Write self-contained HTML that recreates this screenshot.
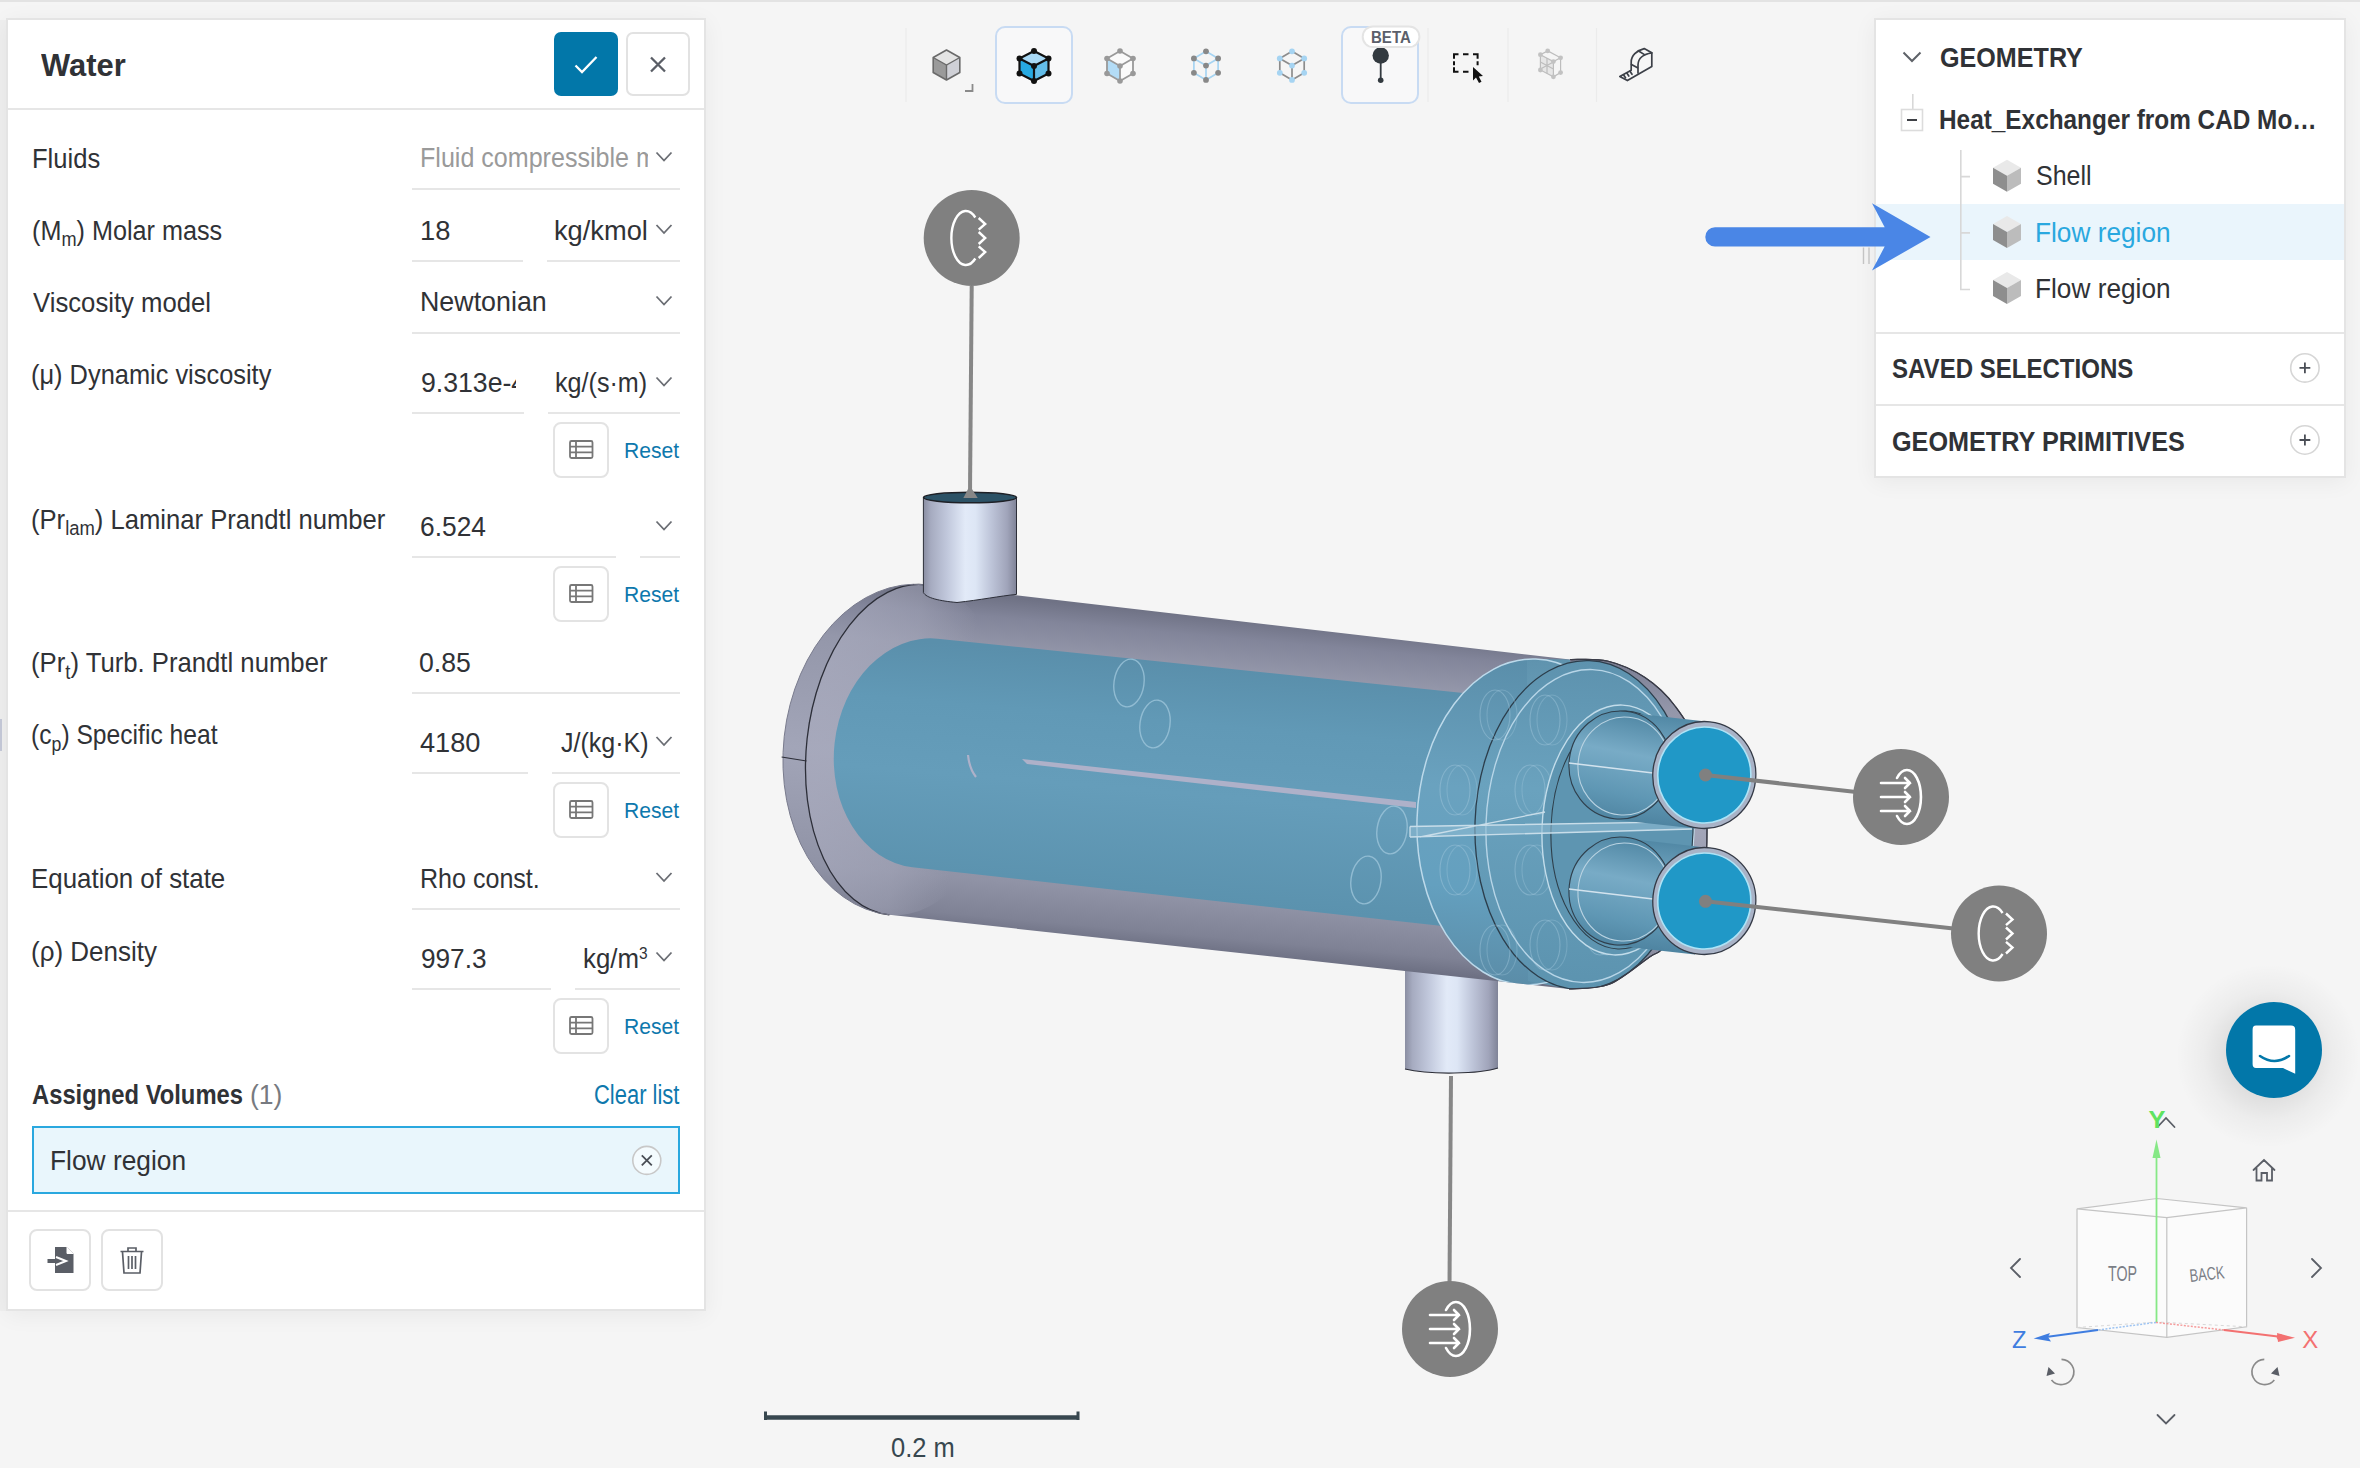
<!DOCTYPE html>
<html><head><meta charset="utf-8"><title>SimScale - Water</title>
<style>
html,body{margin:0;padding:0}
body{width:2360px;height:1468px;overflow:hidden;position:relative;background:#f5f5f5;font-family:"Liberation Sans",sans-serif}
.t{position:absolute;white-space:nowrap;transform-origin:0 0}
.clip{position:absolute;overflow:hidden}
.clip .t{position:absolute}
.box{position:absolute;box-sizing:border-box}
.topbar{position:absolute;left:0;top:0;width:2360px;height:2px;background:#e3e3e3}
.panel{position:absolute;background:#fff;border:2px solid #e4e4e4;box-sizing:border-box;box-shadow:0 4px 22px rgba(0,0,0,0.055)}
</style></head><body>
<div class="topbar"></div>
<div class="box" style="left:0;top:20px;width:6px;height:1291px;background:#efefef"></div>
<div class="box" style="left:0;top:719px;width:2px;height:32px;background:#c6cad9"></div>
<svg style="position:absolute;left:0;top:0" width="2360" height="1468" viewBox="0 0 2360 1468">
<defs>
<linearGradient id="gShell" gradientUnits="userSpaceOnUse" x1="1200" y1="615" x2="1170" y2="950">
 <stop offset="0" stop-color="#6f7285"/><stop offset="0.06" stop-color="#82859a"/><stop offset="0.16" stop-color="#9497aa"/>
 <stop offset="0.5" stop-color="#a2a5b8"/><stop offset="0.84" stop-color="#9093a6"/><stop offset="0.95" stop-color="#7f8295"/><stop offset="1" stop-color="#6d7083"/>
</linearGradient>
<linearGradient id="gBlue" gradientUnits="userSpaceOnUse" x1="1200" y1="665" x2="1180" y2="900">
 <stop offset="0" stop-color="#5a8fab"/><stop offset="0.25" stop-color="#6199b6"/><stop offset="0.55" stop-color="#659dba"/><stop offset="1" stop-color="#5b92ae"/>
</linearGradient>
<linearGradient id="gNoz" x1="0" y1="0" x2="1" y2="0">
 <stop offset="0" stop-color="#8a8ea2"/><stop offset="0.08" stop-color="#a6abc0"/><stop offset="0.25" stop-color="#c0c7db"/><stop offset="0.45" stop-color="#e2eaf8"/>
 <stop offset="0.56" stop-color="#dde6f5"/><stop offset="0.72" stop-color="#bfc6da"/><stop offset="0.9" stop-color="#a0a4ba"/><stop offset="1" stop-color="#7f8397"/>
</linearGradient>
<linearGradient id="gFl" gradientUnits="userSpaceOnUse" x1="1500" y1="660" x2="1480" y2="990">
 <stop offset="0" stop-color="#5a8eaa"/><stop offset="0.4" stop-color="#6aa2bf"/><stop offset="0.7" stop-color="#64a0bf"/><stop offset="1" stop-color="#5a8ba6"/>
</linearGradient>
<linearGradient id="gTube0" gradientUnits="userSpaceOnUse" x1="1640" y1="712" x2="1630" y2="830">
 <stop offset="0" stop-color="#4f86a3"/><stop offset="0.35" stop-color="#78abc6"/><stop offset="0.7" stop-color="#5f97b4"/><stop offset="1" stop-color="#4a7f9c"/>
</linearGradient>
<linearGradient id="gTube1" gradientUnits="userSpaceOnUse" x1="1640" y1="838" x2="1630" y2="956">
 <stop offset="0" stop-color="#4f86a3"/><stop offset="0.35" stop-color="#78abc6"/><stop offset="0.7" stop-color="#5f97b4"/><stop offset="1" stop-color="#4a7f9c"/>
</linearGradient>
<linearGradient id="gFl2" gradientUnits="userSpaceOnUse" x1="1550" y1="660" x2="1540" y2="990">
 <stop offset="0" stop-color="#5f93ae"/><stop offset="0.45" stop-color="#78afca"/><stop offset="1" stop-color="#5e92ad"/>
</linearGradient>
<linearGradient id="gFace" gradientUnits="userSpaceOnUse" x1="1590" y1="660" x2="1580" y2="990">
 <stop offset="0" stop-color="#5d92ae"/><stop offset="0.4" stop-color="#6aa2be"/><stop offset="1" stop-color="#5c93af"/>
</linearGradient>
<linearGradient id="gDomeL" gradientUnits="userSpaceOnUse" x1="820" y1="0" x2="1010" y2="0">
 <stop offset="0" stop-color="#a8aabd" stop-opacity="0.7"/><stop offset="0.45" stop-color="#a8aabd" stop-opacity="0.45"/><stop offset="0.75" stop-color="#a8aabd" stop-opacity="0"/>
</linearGradient>
<radialGradient id="gChatSh" cx="0.5" cy="0.5" r="0.5">
 <stop offset="0.45" stop-color="#000" stop-opacity="0.09"/><stop offset="0.7" stop-color="#000" stop-opacity="0.035"/><stop offset="1" stop-color="#000" stop-opacity="0"/>
</radialGradient>
</defs>
<path d="M1405,955 L1498,955 L1498,1068 C1480,1074 1430,1075 1405,1069 Z" fill="url(#gNoz)"/>
<path d="M1405,1069 C1430,1075 1480,1074 1498,1068" fill="none" stroke="#2c2e38" stroke-width="1.2"/>
<clipPath id="cpShell"><path d="M889.3,914.8 A124,166 6.3 0 1 925.7,584.8 L1570,659.5 C1576.2,659.8 1594.9,658.0 1607.4,661.0 C1619.9,664.0 1633.7,670.0 1645.0,677.5 C1656.3,685.0 1666.3,694.2 1675.0,706.0 C1683.7,717.8 1691.7,728.2 1697.0,748.0 C1702.3,767.8 1706.8,798.8 1707.0,825.0 C1707.2,851.2 1705.2,884.6 1698.0,905.0 C1690.8,925.4 1672.1,938.6 1664.0,947.2 C1655.9,955.9 1658.7,950.7 1649.6,956.9 C1640.5,963.1 1622.7,978.9 1609.3,984.3 C1595.9,989.6 1575.7,988.2 1569.0,989.0 Z"/></clipPath>
<path d="M889.3,914.8 A124,166 6.3 0 1 925.7,584.8 L1570,659.5 C1576.2,659.8 1594.9,658.0 1607.4,661.0 C1619.9,664.0 1633.7,670.0 1645.0,677.5 C1656.3,685.0 1666.3,694.2 1675.0,706.0 C1683.7,717.8 1691.7,728.2 1697.0,748.0 C1702.3,767.8 1706.8,798.8 1707.0,825.0 C1707.2,851.2 1705.2,884.6 1698.0,905.0 C1690.8,925.4 1672.1,938.6 1664.0,947.2 C1655.9,955.9 1658.7,950.7 1649.6,956.9 C1640.5,963.1 1622.7,978.9 1609.3,984.3 C1595.9,989.6 1575.7,988.2 1569.0,989.0 Z" fill="url(#gShell)"/>
<path d="M1570.0,659.5 C1576.2,659.8 1594.9,658.0 1607.4,661.0 C1619.9,664.0 1633.7,670.0 1645.0,677.5 C1656.3,685.0 1666.3,694.2 1675.0,706.0 C1683.7,717.8 1691.7,728.2 1697.0,748.0 C1702.3,767.8 1706.8,798.8 1707.0,825.0 C1707.2,851.2 1705.2,884.6 1698.0,905.0 C1690.8,925.4 1672.1,938.6 1664.0,947.2 C1655.9,955.9 1658.7,950.7 1649.6,956.9 C1640.5,963.1 1622.7,978.9 1609.3,984.3 C1595.9,989.6 1575.7,988.2 1569.0,989.0" fill="none" stroke="#3a3c48" stroke-width="1.2"/>
<g clip-path="url(#cpShell)"><ellipse cx="907.5" cy="749.8" rx="101" ry="166" transform="rotate(6.3 907.5 749.8)" fill="url(#gDomeL)"/></g>
<path d="M889.3,914.8 A101,166 6.3 0 1 925.7,584.8" fill="none" stroke="#2c2e38" stroke-width="1.3"/>
<path d="M889.3,914.8 A124,166 6.3 0 1 925.7,584.8" fill="none" stroke="#7a7c8e" stroke-width="1"/>
<path d="M781.6,757 L806.5,761" stroke="#2c2e38" stroke-width="1.2"/>
<path d="M912.4,867.3 A92,115 6.3 0 1 937.6,638.7 L1150,660.5 L1560,703 L1560,939 L1150,893.7 Z" fill="url(#gBlue)"/>
<path d="M1022,759 L1416,802 L1416,808 L1027,764 Z" fill="#aeb1c9"/>
<path d="M968,755 C969,765 972,772 976,777" fill="none" stroke="#aeb1c9" stroke-width="2.2"/>
<ellipse cx="1129" cy="683" rx="15" ry="24" transform="rotate(8 1129 683)" fill="none" stroke="#9cc4da" stroke-width="1.4" opacity="0.8"/>
<ellipse cx="1155" cy="724" rx="15" ry="24" transform="rotate(8 1155 724)" fill="none" stroke="#9cc4da" stroke-width="1.4" opacity="0.8"/>
<ellipse cx="1392" cy="830" rx="15" ry="24" transform="rotate(8 1392 830)" fill="none" stroke="#9cc4da" stroke-width="1.4" opacity="0.8"/>
<ellipse cx="1366" cy="880" rx="15" ry="24" transform="rotate(8 1366 880)" fill="none" stroke="#9cc4da" stroke-width="1.4" opacity="0.8"/>
<g clip-path="url(#cpShell)">
<ellipse cx="1530" cy="822" rx="113" ry="163" transform="rotate(2 1530 822)" fill="url(#gFl)"/>
<path d="M1527,659 L1570,659.5 L1569,989 L1528,981 Z" fill="url(#gFl2)"/>
<ellipse cx="1530" cy="822" rx="113" ry="163" transform="rotate(2 1530 822)" fill="none" stroke="#bcd9ea" stroke-width="1.5"/>
<ellipse cx="1583.5" cy="825" rx="108.5" ry="164.5" transform="rotate(2 1583.5 825)" fill="url(#gFace)" stroke="#2c3e4c" stroke-width="1.3"/>
<ellipse cx="1587" cy="826" rx="101" ry="156.5" transform="rotate(2 1587 826)" fill="none" stroke="#b7d5e7" stroke-width="1.4"/>
<ellipse cx="1455" cy="790" rx="15" ry="25" fill="none" stroke="#a9cde0" stroke-width="1.1" opacity="0.4"/>
<ellipse cx="1462" cy="790" rx="15" ry="25" fill="none" stroke="#a9cde0" stroke-width="1.1" opacity="0.3"/>
<ellipse cx="1455" cy="870" rx="15" ry="25" fill="none" stroke="#a9cde0" stroke-width="1.1" opacity="0.4"/>
<ellipse cx="1462" cy="870" rx="15" ry="25" fill="none" stroke="#a9cde0" stroke-width="1.1" opacity="0.3"/>
<ellipse cx="1495" cy="715" rx="15" ry="25" fill="none" stroke="#a9cde0" stroke-width="1.1" opacity="0.4"/>
<ellipse cx="1502" cy="715" rx="15" ry="25" fill="none" stroke="#a9cde0" stroke-width="1.1" opacity="0.3"/>
<ellipse cx="1495" cy="950" rx="15" ry="25" fill="none" stroke="#a9cde0" stroke-width="1.1" opacity="0.4"/>
<ellipse cx="1502" cy="950" rx="15" ry="25" fill="none" stroke="#a9cde0" stroke-width="1.1" opacity="0.3"/>
<ellipse cx="1545" cy="720" rx="15" ry="25" fill="none" stroke="#a9cde0" stroke-width="1.1" opacity="0.4"/>
<ellipse cx="1552" cy="720" rx="15" ry="25" fill="none" stroke="#a9cde0" stroke-width="1.1" opacity="0.3"/>
<ellipse cx="1530" cy="790" rx="15" ry="25" fill="none" stroke="#a9cde0" stroke-width="1.1" opacity="0.4"/>
<ellipse cx="1537" cy="790" rx="15" ry="25" fill="none" stroke="#a9cde0" stroke-width="1.1" opacity="0.3"/>
<ellipse cx="1530" cy="870" rx="15" ry="25" fill="none" stroke="#a9cde0" stroke-width="1.1" opacity="0.4"/>
<ellipse cx="1537" cy="870" rx="15" ry="25" fill="none" stroke="#a9cde0" stroke-width="1.1" opacity="0.3"/>
<ellipse cx="1545" cy="945" rx="15" ry="25" fill="none" stroke="#a9cde0" stroke-width="1.1" opacity="0.4"/>
<ellipse cx="1552" cy="945" rx="15" ry="25" fill="none" stroke="#a9cde0" stroke-width="1.1" opacity="0.3"/>
<ellipse cx="1600" cy="735" rx="15" ry="25" fill="none" stroke="#a9cde0" stroke-width="1.1" opacity="0.4"/>
<ellipse cx="1607" cy="735" rx="15" ry="25" fill="none" stroke="#a9cde0" stroke-width="1.1" opacity="0.3"/>
<ellipse cx="1600" cy="930" rx="15" ry="25" fill="none" stroke="#a9cde0" stroke-width="1.1" opacity="0.4"/>
<ellipse cx="1607" cy="930" rx="15" ry="25" fill="none" stroke="#a9cde0" stroke-width="1.1" opacity="0.3"/>
<ellipse cx="1618" cy="830" rx="76" ry="125" transform="rotate(2 1618 830)" fill="#5e95b1" stroke="#c2dcea" stroke-width="1.4"/>
<ellipse cx="1622" cy="830" rx="71" ry="119" transform="rotate(2 1622 830)" fill="none" stroke="#2e3f4b" stroke-width="1.1"/>
<path d="M1410,826.5 L1692,821.6 L1692,829 L1410,837 Z" fill="#8dbbd2" opacity="0.6"/>
<path d="M1410,826.5 L1692,821.6 M1410,837 L1692,829 M1410,826.5 L1410,837 M1420,837 L1545,812" fill="none" stroke="#c8dde9" stroke-width="1.3"/>
</g>
<path d="M1570.0,659.5 C1576.2,659.8 1594.9,658.0 1607.4,661.0 C1619.9,664.0 1633.7,670.0 1645.0,677.5 C1656.3,685.0 1666.3,694.2 1675.0,706.0 C1683.7,717.8 1691.7,728.2 1697.0,748.0 C1702.3,767.8 1706.8,798.8 1707.0,825.0 C1707.2,851.2 1705.2,884.6 1698.0,905.0 C1690.8,925.4 1672.1,938.6 1664.0,947.2 C1655.9,955.9 1658.7,950.7 1649.6,956.9 C1640.5,963.1 1622.7,978.9 1609.3,984.3 C1595.9,989.6 1575.7,988.2 1569.0,989.0" fill="none" stroke="#3a3c48" stroke-width="1.2"/>
<path d="M1622,712 L1706,721.5 L1695,828.5 L1609,819 Z" fill="url(#gTube0)"/><ellipse cx="1620" cy="765" rx="51" ry="54" transform="rotate(6 1620 765)" fill="url(#gTube0)" stroke="#2f3f4c" stroke-width="1.1"/><ellipse cx="1624" cy="766" rx="46" ry="49" transform="rotate(6 1624 766)" fill="none" stroke="#b9d3e2" stroke-width="1.1"/><path d="M1569,763 L1653,773" stroke="#d3e3ee" stroke-width="1.3"/><ellipse cx="1704.3" cy="775" rx="51.5" ry="53.5" transform="rotate(6 1704.3 775)" fill="#a9b3c7" stroke="#343a46" stroke-width="1.3"/><ellipse cx="1704.3" cy="775" rx="46.5" ry="48" transform="rotate(6 1704.3 775)" fill="#2098c7" stroke="#aee3f6" stroke-width="1.6"/>
<path d="M1622,838 L1706,847.5 L1695,954.5 L1609,945 Z" fill="url(#gTube1)"/><ellipse cx="1620" cy="891" rx="51" ry="54" transform="rotate(6 1620 891)" fill="url(#gTube1)" stroke="#2f3f4c" stroke-width="1.1"/><ellipse cx="1624" cy="892" rx="46" ry="49" transform="rotate(6 1624 892)" fill="none" stroke="#b9d3e2" stroke-width="1.1"/><path d="M1569,889 L1653,899" stroke="#d3e3ee" stroke-width="1.3"/><ellipse cx="1704.3" cy="901" rx="51.5" ry="53.5" transform="rotate(6 1704.3 901)" fill="#a9b3c7" stroke="#343a46" stroke-width="1.3"/><ellipse cx="1704.3" cy="901" rx="46.5" ry="48" transform="rotate(6 1704.3 901)" fill="#2098c7" stroke="#aee3f6" stroke-width="1.6"/>
<path d="M923.4,497.5 L1016.5,497.5 L1016.5,594.4 C1000,596 980,600 957,602.5 C940,601 926,598 923.4,592.5 Z" fill="url(#gNoz)"/>
<path d="M923.4,497.5 L923.4,592.5 C926,598 940,601 957,602.5 C980,600 1000,596 1016.5,594.4 L1016.5,497.5" fill="none" stroke="#2c2e38" stroke-width="1"/>
<ellipse cx="970" cy="497.5" rx="46.5" ry="5.2" fill="#2c5266" stroke="#1e2026" stroke-width="1.5"/>
<path d="M971.7,286 L970,492" stroke="#878787" stroke-width="4"/>
<path d="M968,489 L972,489 L977.7,498 L963.4,498 Z" fill="#878787"/>
<path d="M1705.5,775 L1901,797" stroke="#808080" stroke-width="4"/>
<path d="M1705.5,901.3 L1999,933.5" stroke="#808080" stroke-width="4"/>
<circle cx="1705.5" cy="775" r="6.5" fill="#808080"/><circle cx="1705.5" cy="901.3" r="6.5" fill="#808080"/>
<path d="M1451,1076 L1449.5,1285" stroke="#878787" stroke-width="4"/>
<circle cx="971.7" cy="238" r="48" fill="#808080"/><g fill="none" stroke="#fff" stroke-width="2.4" stroke-linecap="butt" stroke-linejoin="miter"><path d="M975.3,217.5 A14.5,27 0 1 0 975.3,258.5"/><path d="M978.7,218.0 L985.2,224.0 L978.7,229.7"/><path d="M978.7,232.0 L985.2,238.0 L978.7,244.0"/><path d="M978.7,246.3 L985.2,252.0 L978.7,258.0"/></g>
<circle cx="1901" cy="797" r="48" fill="#808080"/><g fill="none" stroke="#fff" stroke-width="2.6" stroke-linecap="round"><path d="M1897.0,778.0 A14,27 0 1 1 1897.0,816.0"/><path d="M1881,783 L1910,783 M1905,778 L1910,783 L1905,788"/><path d="M1881,797 L1910,797 M1905,792 L1910,797 L1905,802"/><path d="M1881,811 L1910,811 M1905,806 L1910,811 L1905,816"/></g>
<circle cx="1999" cy="933.5" r="48" fill="#808080"/><g fill="none" stroke="#fff" stroke-width="2.4" stroke-linecap="butt" stroke-linejoin="miter"><path d="M2002.6,913.0 A14.5,27 0 1 0 2002.6,954.0"/><path d="M2006.0,913.5 L2012.5,919.5 L2006.0,925.2"/><path d="M2006.0,927.5 L2012.5,933.5 L2006.0,939.5"/><path d="M2006.0,941.8 L2012.5,947.5 L2006.0,953.5"/></g>
<circle cx="1450" cy="1329" r="48" fill="#808080"/><g fill="none" stroke="#fff" stroke-width="2.6" stroke-linecap="round"><path d="M1446.0,1310.0 A14,27 0 1 1 1446.0,1348.0"/><path d="M1430,1315 L1459,1315 M1454,1310 L1459,1315 L1454,1320"/><path d="M1430,1329 L1459,1329 M1454,1324 L1459,1329 L1454,1334"/><path d="M1430,1343 L1459,1343 M1454,1338 L1459,1343 L1454,1348"/></g>
<path d="M764,1417.5 L1079,1417.5" stroke="#37474f" stroke-width="4.5"/>
<path d="M765.5,1411.5 L765.5,1420 M1078,1411.5 L1078,1420" stroke="#37474f" stroke-width="3"/>
<circle cx="2268" cy="1056" r="92" fill="url(#gChatSh)"/>
<circle cx="2274" cy="1050" r="48" fill="#0277a9"/>
<path d="M2256,1025.5 L2291,1025.5 Q2295.2,1025.5 2295.2,1029.7 L2295.2,1073.8 L2283,1068 L2256,1068 Q2252.6,1068 2252.6,1064 L2252.6,1029.7 Q2252.6,1025.5 2256,1025.5 Z" fill="#fff"/>
<path d="M2260,1056 Q2274.5,1066 2289,1056" fill="none" stroke="#0277a9" stroke-width="2.6" stroke-linecap="round"/>
<path d="M2077,1208.8 L2157,1198.5 L2246.6,1207.8 L2246.6,1326.8 L2166.8,1337.4 L2077,1327.5 Z" fill="#fbfbfb"/>
<g fill="none" stroke="#c4c4c4" stroke-width="1.2"><path d="M2077,1208.8 L2157,1198.5 L2246.6,1207.8 L2166.8,1217.7 Z"/><path d="M2077,1208.8 L2077,1327.5 L2166.8,1337.4 L2246.6,1326.8 L2246.6,1207.8"/><path d="M2166.8,1217.7 L2166.8,1337.4"/></g>
<path d="M2077,1327.5 L2157,1322 L2246.6,1326.8" fill="none" stroke="#d8d8d8" stroke-width="1" stroke-dasharray="3 3"/>
<path d="M2156.5,1322 L2156.5,1152" stroke="#86e886" stroke-width="1.8"/><path d="M2156.5,1139.5 L2160.5,1158 L2152.5,1158 Z" fill="#86e886"/>
<path d="M2156,1322.4 L2098,1330" stroke="#9cc3f2" stroke-width="1.5" stroke-dasharray="2 1.5"/><path d="M2098,1330 L2046,1337" stroke="#3f7de0" stroke-width="2"/><path d="M2033.6,1338.5 L2050,1333 L2048,1337 L2051,1341.5 Z" fill="#3f7de0"/>
<path d="M2156,1322.4 L2224,1330" stroke="#f59a9a" stroke-width="1.5" stroke-dasharray="2 1.5"/><path d="M2224,1330 L2282,1337" stroke="#f37171" stroke-width="2.2"/><path d="M2295,1337.8 L2277,1333 L2278,1342 Z" fill="#f37171"/><circle cx="2279.7" cy="1337" r="3" fill="#f37171"/>
<g fill="none" stroke="#5a5e66" stroke-width="1.8" stroke-linecap="round"><path d="M2157.5,1127 L2166,1118 L2174.5,1127"/><path d="M2157.5,1415 L2166,1423.5 L2174.5,1415"/><path d="M2020,1259 L2011,1268 L2020,1277"/><path d="M2312,1259 L2321,1268 L2312,1277"/><path d="M2253.5,1170 L2264,1160 L2274.5,1170 M2256.5,1168 L2256.5,1180.5 L2261.5,1180.5 L2261.5,1173 L2267,1173 L2267,1180.5 L2272,1180.5 L2272,1168"/></g>
<g fill="none" stroke="#8a8a8a" stroke-width="1.7"><path d="M2061.5,1359.4 A12.6,12.6 0 1 1 2051.5,1380"/><path d="M2264.3,1359.4 A12.6,12.6 0 1 0 2274.3,1380"/></g>
<path d="M2046.5,1376 L2048.5,1367 L2055,1373.5 Z" fill="#5a5e66"/><path d="M2279.5,1376 L2277.5,1367 L2271,1373.5 Z" fill="#5a5e66"/>
<text x="2108" y="1281" font-family="Liberation Sans" font-size="21.5" fill="#7a7e86" textLength="29" lengthAdjust="spacingAndGlyphs">TOP</text>
<text x="2189.5" y="1282" font-family="Liberation Sans" font-size="18" fill="#7a7e86" textLength="35" lengthAdjust="spacingAndGlyphs" transform="rotate(-6 2189 1275)">BACK</text>
<text x="2148.5" y="1128" font-family="Liberation Sans" font-size="24" font-weight="700" fill="#5fe35f" textLength="17" lengthAdjust="spacingAndGlyphs">Y</text>
<text x="2012" y="1348.3" font-family="Liberation Sans" font-size="23" fill="#3f7de0" textLength="14.5" lengthAdjust="spacingAndGlyphs">Z</text>
<text x="2302.3" y="1348.3" font-family="Liberation Sans" font-size="23" fill="#f37171" textLength="16" lengthAdjust="spacingAndGlyphs">X</text>
</svg>
<svg style="position:absolute;left:880px;top:0" width="800" height="120" viewBox="880 0 800 120">
<path d="M906,28 L906,102" stroke="#ebebeb" stroke-width="1.2"/>
<path d="M1428,28 L1428,102" stroke="#ebebeb" stroke-width="1.2"/>
<path d="M1508,28 L1508,102" stroke="#ebebeb" stroke-width="1.2"/>
<path d="M1596.5,28 L1596.5,102" stroke="#ebebeb" stroke-width="1.2"/>
<rect x="996" y="27" width="76" height="76" rx="9" fill="#f8f8f9" stroke="#c8dbf3" stroke-width="2"/>
<rect x="1342" y="27" width="76" height="76" rx="9" fill="#f8f8f9" stroke="#c8dbf3" stroke-width="2"/>
<polygon points="946.5,50.0 959.8,57.5 946.5,65.0 933.2,57.5" fill="#e4e4e4"/>
<polygon points="933.2,57.5 946.5,65.0 946.5,80.0 933.2,72.5" fill="#9a9a9a"/>
<polygon points="946.5,65.0 959.8,57.5 959.8,72.5 946.5,80.0" fill="#cfd0d6"/>
<polygon points="946.5,50.0 959.8,57.5 959.8,72.5 946.5,80.0 933.2,72.5 933.2,57.5" fill="none" stroke="#6a6a6a" stroke-width="1.6" stroke-linejoin="round"/>
<polyline points="933.2,57.5 946.5,65.0 959.8,57.5" fill="none" stroke="#6a6a6a" stroke-width="1.4"/><path d="M946.5,65.0 L946.5,80" stroke="#6a6a6a" stroke-width="1.4"/>
<path d="M965,91 L972.5,91 L972.5,84" fill="none" stroke="#8a8a8a" stroke-width="1.8"/>
<polygon points="1034.0,51.0 1048.5,58.5 1034.0,66.0 1019.5,58.5" fill="#a9d9f5"/>
<polygon points="1019.5,58.5 1034.0,66.0 1034.0,81.0 1019.5,73.5" fill="#27a9e1"/>
<polygon points="1034.0,66.0 1048.5,58.5 1048.5,73.5 1034.0,81.0" fill="#63bde9"/>
<polygon points="1034.0,51.0 1048.5,58.5 1048.5,73.5 1034.0,81.0 1019.5,73.5 1019.5,58.5" fill="none" stroke="#111" stroke-width="2.2" stroke-linejoin="round"/>
<polyline points="1019.5,58.5 1034.0,66.0 1048.5,58.5" fill="none" stroke="#111" stroke-width="2.2"/><path d="M1034,66.0 L1034,81" stroke="#111" stroke-width="2.2"/>
<circle cx="1034.0" cy="51.0" r="3" fill="#111"/>
<circle cx="1048.5" cy="58.5" r="3" fill="#111"/>
<circle cx="1048.5" cy="73.5" r="3" fill="#111"/>
<circle cx="1034.0" cy="81.0" r="3" fill="#111"/>
<circle cx="1019.5" cy="73.5" r="3" fill="#111"/>
<circle cx="1019.5" cy="58.5" r="3" fill="#111"/>
<circle cx="1034.0" cy="66.0" r="3" fill="#111"/>
<polygon points="1107.0,58.5 1120.0,66.0 1120.0,81.0 1107.0,73.5" fill="#b3dcf6"/>
<polygon points="1120.0,51.0 1133.0,58.5 1120.0,66.0 1107.0,58.5" fill="#fafafa"/><polygon points="1120.0,66.0 1133.0,58.5 1133.0,73.5 1120.0,81.0" fill="#fafafa"/>
<polygon points="1120.0,51.0 1133.0,58.5 1133.0,73.5 1120.0,81.0 1107.0,73.5 1107.0,58.5" fill="none" stroke="#999" stroke-width="1.8" stroke-linejoin="round"/>
<polyline points="1107.0,58.5 1120.0,66.0 1133.0,58.5" fill="none" stroke="#999" stroke-width="1.8"/><path d="M1120,66.0 L1120,81" stroke="#999" stroke-width="1.8"/>
<circle cx="1120.0" cy="51.0" r="2.8" fill="#999"/>
<circle cx="1133.0" cy="58.5" r="2.8" fill="#999"/>
<circle cx="1133.0" cy="73.5" r="2.8" fill="#999"/>
<circle cx="1120.0" cy="81.0" r="2.8" fill="#999"/>
<circle cx="1107.0" cy="73.5" r="2.8" fill="#999"/>
<circle cx="1107.0" cy="58.5" r="2.8" fill="#999"/>
<circle cx="1120.0" cy="66.0" r="2.8" fill="#999"/>
<polygon points="1206.0,51.3 1218.1,58.4 1218.1,72.8 1206.0,79.9 1193.9,72.8 1193.9,58.4" fill="none" stroke="#a6d4f2" stroke-width="1.7"/>
<polyline points="1193.9,58.4 1206.0,65.6 1218.1,58.4" fill="none" stroke="#a6d4f2" stroke-width="1.7"/><path d="M1206,65.6 L1206,79.9" stroke="#a6d4f2" stroke-width="1.7"/>
<circle cx="1206.0" cy="51.3" r="2.9" fill="#888"/>
<circle cx="1218.1" cy="58.4" r="2.9" fill="#888"/>
<circle cx="1218.1" cy="72.8" r="2.9" fill="#888"/>
<circle cx="1206.0" cy="79.9" r="2.9" fill="#888"/>
<circle cx="1193.9" cy="72.8" r="2.9" fill="#888"/>
<circle cx="1193.9" cy="58.4" r="2.9" fill="#888"/>
<circle cx="1206.0" cy="65.6" r="2.9" fill="#888"/>
<polygon points="1292.0,51.3 1304.2,58.4 1304.2,72.8 1292.0,79.9 1279.8,72.8 1279.8,58.4" fill="none" stroke="#8c8c8c" stroke-width="1.7"/>
<polyline points="1279.8,58.4 1292.0,65.6 1304.2,58.4" fill="none" stroke="#8c8c8c" stroke-width="1.7"/><path d="M1292,65.6 L1292,79.9" stroke="#8c8c8c" stroke-width="1.7"/>
<circle cx="1292.0" cy="51.3" r="2.9" fill="#a6d4f2"/>
<circle cx="1304.2" cy="58.4" r="2.9" fill="#a6d4f2"/>
<circle cx="1304.2" cy="72.8" r="2.9" fill="#a6d4f2"/>
<circle cx="1292.0" cy="79.9" r="2.9" fill="#a6d4f2"/>
<circle cx="1279.8" cy="72.8" r="2.9" fill="#a6d4f2"/>
<circle cx="1279.8" cy="58.4" r="2.9" fill="#a6d4f2"/>
<circle cx="1292.0" cy="65.6" r="2.9" fill="#a6d4f2"/>
<path d="M1380.7,60 L1380.7,80" stroke="#333a40" stroke-width="1.8"/><circle cx="1380.7" cy="80.2" r="2.8" fill="#333a40"/><circle cx="1380.7" cy="55.5" r="8.2" fill="#333a40"/>
<rect x="1362.7" y="26.4" width="56.7" height="20.7" rx="10.3" fill="#fff" stroke="#e4e4e4" stroke-width="2"/>
<path d="M1458.5,54.3 L1454,54.3 L1454,58.8 M1463,54.3 L1468.5,54.3 M1473,54.3 L1477.6,54.3 L1477.6,58.8 M1454,61.3 L1454,65.3 M1477.6,61.3 L1477.6,65.3 M1454,67.3 L1454,71.7 L1458.5,71.7 M1463,71.7 L1468.5,71.7" fill="none" stroke="#111" stroke-width="2"/>
<path d="M1473,67 L1473,80.5 L1476,77.5 L1479,83 L1481.5,81.8 L1478.8,76.5 L1483,76 Z" fill="#111"/>
<polygon points="1540.4,54.7 1553.4,61.6 1553.4,76.8 1540.4,70.0" fill="#e6e6e6"/>
<g fill="none" stroke="#bdbdbd" stroke-width="1.2"><polygon points="1547.7,50.9 1560.6,57.8 1560.6,72.6 1553.4,76.8 1540.4,70.0 1540.4,54.7"/><polyline points="1540.4,54.7 1553.4,61.6 1560.6,57.8"/><path d="M1553.4,61.6 L1553.4,76.8 M1547,58 L1547,73.5 M1540.4,62 L1553.4,69 M1540.4,69 L1553.4,62"/></g>
<circle cx="1547.7" cy="50.9" r="2.4" fill="#c2c2c2"/>
<circle cx="1540.4" cy="54.7" r="2.4" fill="#c2c2c2"/>
<circle cx="1560.6" cy="57.8" r="2.4" fill="#c2c2c2"/>
<circle cx="1553.4" cy="61.6" r="2.4" fill="#c2c2c2"/>
<circle cx="1540.4" cy="70" r="2.4" fill="#c2c2c2"/>
<circle cx="1560.6" cy="72.6" r="2.4" fill="#c2c2c2"/>
<circle cx="1553.4" cy="76.8" r="2.4" fill="#c2c2c2"/>
<g fill="none" stroke="#3c4048" stroke-width="1.7" stroke-linejoin="round" stroke-linecap="round"><path d="M1644.2,48.6 L1651.8,52.8 L1651.8,66.5 L1627.4,80.6 L1619.8,76.4 L1631.2,70.3 L1631.2,62 C1631.2,55.5 1636.5,50.5 1644.2,48.6 Z" fill="#f6f6f6"/><path d="M1638,73 L1638,65 C1638,58.5 1643.5,54 1651.8,52.8"/><path d="M1639,51.2 L1644.5,54.6"/><path d="M1631.5,64.5 L1637.5,67.8"/><path d="M1623.5,74.8 L1625.5,77.8 M1626.8,73 L1628.8,76 M1630,71.3 L1632,74.3"/></g>
</svg>
<div class="panel" style="left:6px;top:18px;width:700px;height:1293px"></div>
<div class="box" style="left:8px;top:108px;width:696px;height:2px;background:#e6e6e6"></div>
<div class="box" style="left:554px;top:32px;width:64px;height:64px;border-radius:7px;background:#0277a9"></div>
<div class="box" style="left:626px;top:32px;width:64px;height:64px;border-radius:7px;border:2px solid #e2e2e2;background:#fff"></div>
<div class="box" style="left:412px;top:188px;width:268px;height:2px;background:#e6e6e6"></div>
<div class="box" style="left:412px;top:260px;width:111px;height:2px;background:#e6e6e6"></div>
<div class="box" style="left:547px;top:260px;width:133px;height:2px;background:#e6e6e6"></div>
<div class="box" style="left:412px;top:332px;width:268px;height:2px;background:#e6e6e6"></div>
<div class="box" style="left:412px;top:412px;width:112px;height:2px;background:#e6e6e6"></div>
<div class="box" style="left:548px;top:412px;width:132px;height:2px;background:#e6e6e6"></div>
<div class="box" style="left:412px;top:556px;width:204px;height:2px;background:#e6e6e6"></div>
<div class="box" style="left:640px;top:556px;width:40px;height:2px;background:#e6e6e6"></div>
<div class="box" style="left:412px;top:692px;width:268px;height:2px;background:#e6e6e6"></div>
<div class="box" style="left:412px;top:772px;width:115.5px;height:2px;background:#e6e6e6"></div>
<div class="box" style="left:552px;top:772px;width:128px;height:2px;background:#e6e6e6"></div>
<div class="box" style="left:412px;top:908px;width:268px;height:2px;background:#e6e6e6"></div>
<div class="box" style="left:412px;top:988px;width:139px;height:2px;background:#e6e6e6"></div>
<div class="box" style="left:575px;top:988px;width:105px;height:2px;background:#e6e6e6"></div>
<div class="box" style="left:553px;top:422px;width:56px;height:56px;border:2px solid #e3e3e3;border-radius:8px;background:#fff"></div>
<div class="box" style="left:553px;top:566px;width:56px;height:56px;border:2px solid #e3e3e3;border-radius:8px;background:#fff"></div>
<div class="box" style="left:553px;top:782px;width:56px;height:56px;border:2px solid #e3e3e3;border-radius:8px;background:#fff"></div>
<div class="box" style="left:553px;top:998px;width:56px;height:56px;border:2px solid #e3e3e3;border-radius:8px;background:#fff"></div>
<div class="box" style="left:32px;top:1126px;width:648px;height:67.5px;border:2px solid #2aa8df;background:#e9f6fc"></div>
<div class="box" style="left:8px;top:1210px;width:696px;height:2px;background:#e6e6e6"></div>
<div class="box" style="left:29px;top:1229px;width:62px;height:62px;border:2px solid #e2e2e2;border-radius:8px;background:#fff"></div>
<div class="box" style="left:101px;top:1229px;width:62px;height:62px;border:2px solid #e2e2e2;border-radius:8px;background:#fff"></div>
<svg style="position:absolute;left:0;top:0" width="720" height="1320" viewBox="0 0 720 1320">
<polyline points="575.5,65.5 582,72 596.5,57" fill="none" stroke="#fff" stroke-width="2.3"/>
<path d="M651,57.5 L665,71.5 M665,57.5 L651,71.5" stroke="#5a5e66" stroke-width="2.3"/>
<polyline points="656.5,152.5 664,160.5 671.5,152.5" fill="none" stroke="#6a6d73" stroke-width="1.8"/>
<polyline points="656.5,225 664,233 671.5,225" fill="none" stroke="#6a6d73" stroke-width="1.8"/>
<polyline points="656.5,296.5 664,304.5 671.5,296.5" fill="none" stroke="#6a6d73" stroke-width="1.8"/>
<polyline points="656.5,377.5 664,385.5 671.5,377.5" fill="none" stroke="#6a6d73" stroke-width="1.8"/>
<polyline points="656.5,521.5 664,529.5 671.5,521.5" fill="none" stroke="#6a6d73" stroke-width="1.8"/>
<polyline points="656.5,737 664,745 671.5,737" fill="none" stroke="#6a6d73" stroke-width="1.8"/>
<polyline points="656.5,873 664,881 671.5,873" fill="none" stroke="#6a6d73" stroke-width="1.8"/>
<polyline points="656.5,952.5 664,960.5 671.5,952.5" fill="none" stroke="#6a6d73" stroke-width="1.8"/>
<g fill="none" stroke="#777" stroke-width="1.8"><rect x="570" y="441" width="22.5" height="17" rx="1.5"/><path d="M576,441 L576,458 M570,446.7 L592.5,446.7 M570,452.3 L592.5,452.3"/></g>
<g fill="none" stroke="#777" stroke-width="1.8"><rect x="570" y="585" width="22.5" height="17" rx="1.5"/><path d="M576,585 L576,602 M570,590.7 L592.5,590.7 M570,596.3 L592.5,596.3"/></g>
<g fill="none" stroke="#777" stroke-width="1.8"><rect x="570" y="801" width="22.5" height="17" rx="1.5"/><path d="M576,801 L576,818 M570,806.7 L592.5,806.7 M570,812.3 L592.5,812.3"/></g>
<g fill="none" stroke="#777" stroke-width="1.8"><rect x="570" y="1017" width="22.5" height="17" rx="1.5"/><path d="M576,1017 L576,1034 M570,1022.7 L592.5,1022.7 M570,1028.3 L592.5,1028.3"/></g>
<circle cx="646.8" cy="1160.4" r="14" fill="#fff" fill-opacity="0.5" stroke="#c8c8c8" stroke-width="1.6"/>
<path d="M641.8,1155.4 L651.8,1165.4 M651.8,1155.4 L641.8,1165.4" stroke="#4a4e56" stroke-width="1.8"/>
<path d="M55,1247 L67,1247 L73.5,1253.5 L73.5,1273 L55,1273 L55,1263 L47.5,1263 L47.5,1259 L55,1259 Z" fill="#5a5e66"/>
<path d="M67,1247 L67,1253.5 L73.5,1253.5" fill="#fff" stroke="#fff" stroke-width="1"/>
<path d="M56,1257 L66,1261 L56,1265" fill="none" stroke="#fff" stroke-width="2"/>
<g fill="none" stroke="#5a5e66" stroke-width="1.7"><path d="M120.5,1251.5 L143.5,1251.5 M128,1251.5 L128,1248 L136,1248 L136,1251.5"/><path d="M122.5,1252 L124,1273 L140,1273 L141.5,1252"/><path d="M128.5,1256 L128.5,1269 M132,1256 L132,1269 M135.5,1256 L135.5,1269"/></g>
</svg>
<div class="panel" style="left:1874px;top:18px;width:472px;height:460px"></div>
<div class="box" style="left:1876px;top:204px;width:468px;height:56px;background:#eaf5fc"></div>
<div class="box" style="left:1876px;top:332px;width:468px;height:2px;background:#e6e6e6"></div>
<div class="box" style="left:1876px;top:404px;width:468px;height:2px;background:#e6e6e6"></div>
<svg style="position:absolute;left:1860px;top:30px" width="500" height="440" viewBox="1860 30 500 440">
<polyline points="1903.5,52.5 1912,61 1920.5,52.5" fill="none" stroke="#5e6268" stroke-width="2"/>
<path d="M1912.8,94 L1912.8,109.5" stroke="#d8d8d8" stroke-width="1.6"/>
<rect x="1901.5" y="109.5" width="21" height="21" fill="none" stroke="#dcdcdc" stroke-width="1.6"/>
<path d="M1907,120 L1917,120" stroke="#3e4046" stroke-width="2"/>
<path d="M1960.8,150 L1960.8,289.5 L1970,289.5 M1960.8,176.6 L1970,176.6 M1960.8,232.9 L1970,232.9" fill="none" stroke="#d8d8d8" stroke-width="1.6"/>
<polygon points="2007,159.7 2021,167.7 2007,175.7 1993,167.7" fill="#e9e9e9"/><polygon points="1993,167.7 2007,175.7 2007,191.7 1993,183.7" fill="#8e8e8e"/><polygon points="2007,175.7 2021,167.7 2021,183.7 2007,191.7" fill="#bcbcbc"/>
<polygon points="2007,215.9 2021,223.9 2007,231.9 1993,223.9" fill="#e9e9e9"/><polygon points="1993,223.9 2007,231.9 2007,247.9 1993,239.9" fill="#8e8e8e"/><polygon points="2007,231.9 2021,223.9 2021,239.9 2007,247.9" fill="#bcbcbc"/>
<polygon points="2007,272.1 2021,280.1 2007,288.1 1993,280.1" fill="#e9e9e9"/><polygon points="1993,280.1 2007,288.1 2007,304.1 1993,296.1" fill="#8e8e8e"/><polygon points="2007,288.1 2021,280.1 2021,296.1 2007,304.1" fill="#bcbcbc"/>
<circle cx="2304.9" cy="367.9" r="14.2" fill="#fff" stroke="#d6d6d6" stroke-width="1.6"/>
<path d="M2299.5,367.9 L2310.3,367.9 M2304.9,362.5 L2304.9,373.29999999999995" stroke="#4a4e56" stroke-width="1.8"/>
<circle cx="2304.9" cy="440" r="14.2" fill="#fff" stroke="#d6d6d6" stroke-width="1.6"/>
<path d="M2299.5,440 L2310.3,440 M2304.9,434.6 L2304.9,445.4" stroke="#4a4e56" stroke-width="1.8"/>
</svg>
<svg style="position:absolute;left:1690px;top:190px" width="260" height="100" viewBox="1690 190 260 100"><path d="M1715,227.2 L1884.7,227.2 L1872,203.2 L1930.5,236.9 L1872,270.6 L1884.7,246.6 L1715,246.6 A9.7,9.7 0 0 1 1715,227.2 Z" fill="#4a86e6"/><path d="M1863.5,247.5 L1863.5,264 M1869,247.5 L1869,264" stroke="#c4c4c4" stroke-width="1.4"/></svg>
<span class="t" style="left:40.90px;top:48.92px;font-size:31.98px;line-height:31.98px;color:#303236;font-weight:700;transform:scaleX(0.9667);">Water</span>
<span class="t" style="left:31.93px;top:144.86px;font-size:27.33px;line-height:27.33px;color:#303236;transform:scaleX(0.9357);">Fluids</span>
<div class="clip" style="left:419.6px;top:139.8px;width:228.4px;height:38.1px"><span class="t" style="left:0.15px;top:4.17px;font-size:27.18px;line-height:27.18px;color:#9a9a9a;transform:scaleX(0.9225)">Fluid compressible media</span></div>
<span class="t" style="left:31.98px;top:216.70px;font-size:27.76px;line-height:27.76px;color:#303236;transform:scaleX(0.9082);">(M<span style="font-size:72%;position:relative;top:0.32em">m</span>) Molar mass</span>
<span class="t" style="left:420.00px;top:216.86px;font-size:27.33px;line-height:27.33px;color:#303236;transform:scaleX(1.0000);">18</span>
<span class="t" style="left:554.31px;top:216.86px;font-size:27.33px;line-height:27.33px;color:#303236;transform:scaleX(0.9967);">kg/kmol</span>
<span class="t" style="left:32.90px;top:289.06px;font-size:27.33px;line-height:27.33px;color:#303236;transform:scaleX(0.9404);">Viscosity model</span>
<span class="t" style="left:419.74px;top:287.66px;font-size:27.33px;line-height:27.33px;color:#303236;transform:scaleX(0.9817);">Newtonian</span>
<span class="t" style="left:31.34px;top:360.86px;font-size:27.33px;line-height:27.33px;color:#303236;transform:scaleX(0.9292);">(μ) Dynamic viscosity</span>
<div class="clip" style="left:419.7px;top:364.8px;width:96.3px;height:38.3px"><span class="t" style="left:1.03px;top:4.19px;font-size:27.33px;line-height:27.33px;color:#303236;transform:scaleX(0.9745)">9.313e-4</span></div>
<span class="t" style="left:555.46px;top:368.86px;font-size:27.33px;line-height:27.33px;color:#303236;transform:scaleX(0.9196);">kg/(s·m)</span>
<span class="t" style="left:624.40px;top:440.27px;font-size:22.24px;line-height:22.24px;color:#0e78ad;transform:scaleX(0.9500);">Reset</span>
<span class="t" style="left:30.83px;top:505.56px;font-size:27.33px;line-height:27.33px;color:#303236;transform:scaleX(0.9375);">(Pr<span style="font-size:72%;position:relative;top:0.32em">lam</span>) Laminar Prandtl number</span>
<span class="t" style="left:420.04px;top:512.76px;font-size:27.33px;line-height:27.33px;color:#303236;transform:scaleX(0.9642);">6.524</span>
<span class="t" style="left:624.40px;top:584.07px;font-size:22.24px;line-height:22.24px;color:#0e78ad;transform:scaleX(0.9500);">Reset</span>
<span class="t" style="left:30.82px;top:649.46px;font-size:27.33px;line-height:27.33px;color:#303236;transform:scaleX(0.9403);">(Pr<span style="font-size:72%;position:relative;top:0.32em">t</span>) Turb. Prandtl number</span>
<span class="t" style="left:419.23px;top:649.46px;font-size:27.33px;line-height:27.33px;color:#303236;transform:scaleX(0.9745);">0.85</span>
<span class="t" style="left:30.90px;top:721.36px;font-size:27.33px;line-height:27.33px;color:#303236;transform:scaleX(0.9015);">(c<span style="font-size:72%;position:relative;top:0.32em">p</span>) Specific heat</span>
<span class="t" style="left:420.01px;top:728.86px;font-size:27.33px;line-height:27.33px;color:#303236;transform:scaleX(0.9949);">4180</span>
<span class="t" style="left:560.80px;top:728.86px;font-size:27.33px;line-height:27.33px;color:#303236;transform:scaleX(0.9149);">J/(kg·K)</span>
<span class="t" style="left:624.40px;top:799.87px;font-size:22.24px;line-height:22.24px;color:#0e78ad;transform:scaleX(0.9500);">Reset</span>
<span class="t" style="left:30.81px;top:864.56px;font-size:27.33px;line-height:27.33px;color:#303236;transform:scaleX(0.9470);">Equation of state</span>
<span class="t" style="left:419.97px;top:864.56px;font-size:27.33px;line-height:27.33px;color:#303236;transform:scaleX(0.9167);">Rho const.</span>
<span class="t" style="left:30.80px;top:937.76px;font-size:27.33px;line-height:27.33px;color:#303236;transform:scaleX(0.9508);">(ρ) Density</span>
<span class="t" style="left:420.84px;top:945.26px;font-size:27.33px;line-height:27.33px;color:#303236;transform:scaleX(0.9576);">997.3</span>
<span class="t" style="left:582.51px;top:945.26px;font-size:27.33px;line-height:27.33px;color:#303236;transform:scaleX(0.9455);">kg/m<span style="font-size:60%;position:relative;top:-0.55em">3</span></span>
<span class="t" style="left:624.40px;top:1016.27px;font-size:22.24px;line-height:22.24px;color:#0e78ad;transform:scaleX(0.9500);">Reset</span>
<span class="t" style="left:31.84px;top:1080.71px;font-size:27.62px;line-height:27.62px;color:#303236;font-weight:700;transform:scaleX(0.8613);">Assigned Volumes</span>
<span class="t" style="left:249.88px;top:1080.61px;font-size:27.62px;line-height:27.62px;color:#777a80;transform:scaleX(0.9600);">(1)</span>
<span class="t" style="left:594.40px;top:1080.61px;font-size:27.62px;line-height:27.62px;color:#0e78ad;transform:scaleX(0.7953);">Clear list</span>
<span class="t" style="left:50.39px;top:1146.81px;font-size:27.62px;line-height:27.62px;color:#303236;transform:scaleX(0.9532);">Flow region</span>
<span class="t" style="left:1939.51px;top:42.80px;font-size:28.34px;line-height:28.34px;color:#303236;font-weight:700;transform:scaleX(0.8869);">GEOMETRY</span>
<span class="t" style="left:1939.20px;top:107.31px;font-size:27.03px;line-height:27.03px;color:#303236;font-weight:700;transform:scaleX(0.9017);">Heat_Exchanger from CAD Mo…</span>
<span class="t" style="left:2035.98px;top:162.36px;font-size:27.33px;line-height:27.33px;color:#303236;transform:scaleX(0.9155);">Shell</span>
<span class="t" style="left:2034.58px;top:218.56px;font-size:27.33px;line-height:27.33px;color:#2aa8df;transform:scaleX(0.9601);">Flow region</span>
<span class="t" style="left:2034.58px;top:274.76px;font-size:27.33px;line-height:27.33px;color:#303236;transform:scaleX(0.9601);">Flow region</span>
<span class="t" style="left:1891.72px;top:355.19px;font-size:27.18px;line-height:27.18px;color:#303236;font-weight:700;transform:scaleX(0.8845);">SAVED SELECTIONS</span>
<span class="t" style="left:1891.67px;top:427.69px;font-size:27.18px;line-height:27.18px;color:#303236;font-weight:700;transform:scaleX(0.9280);">GEOMETRY PRIMITIVES</span>
<span class="t" style="left:1370.92px;top:28.50px;font-size:17.01px;line-height:17.01px;color:#5b5f6b;font-weight:700;transform:scaleX(0.8841);">BETA</span>
<span class="t" style="left:890.56px;top:1434.29px;font-size:27.18px;line-height:27.18px;color:#37474f;transform:scaleX(0.9385);">0.2 m</span>
</body></html>
